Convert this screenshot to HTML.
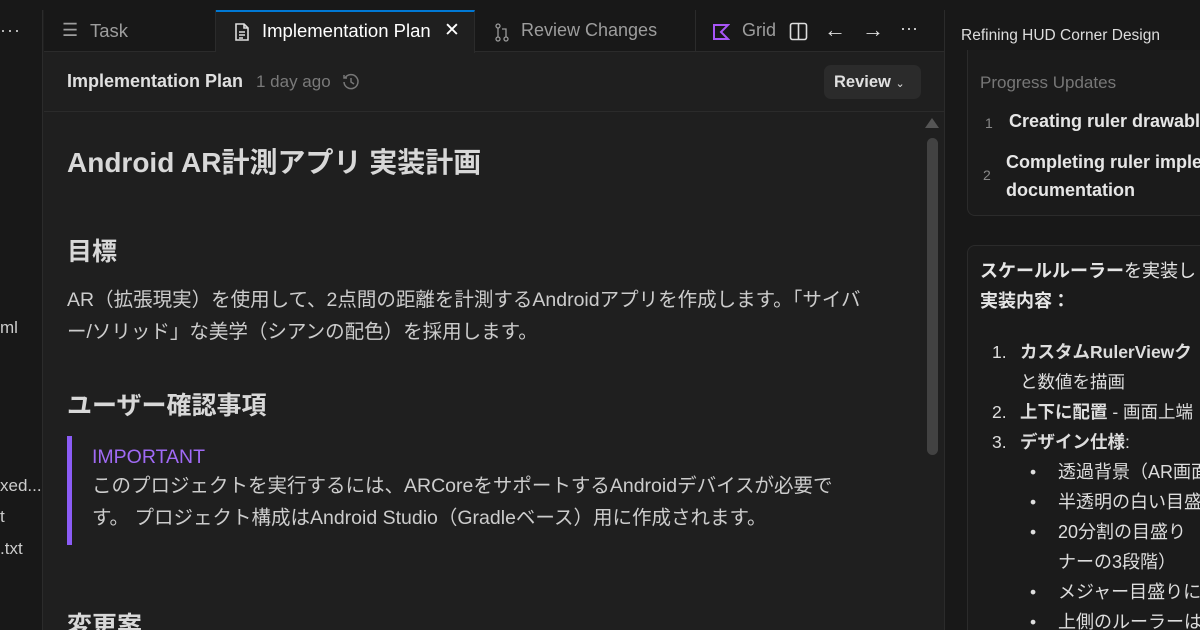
<!DOCTYPE html>
<html><head><meta charset="utf-8"><style>
*{margin:0;padding:0;box-sizing:border-box}
html,body{width:1200px;height:630px;overflow:hidden}
body{background:#1f1f1f;font-family:"Liberation Sans","Noto Sans CJK JP",sans-serif;color:#cccccc;position:relative}
.a{position:absolute;white-space:nowrap}
</style></head><body>
<div class="a" style="left:0;top:0;width:1200px;height:10px;background:#181818"></div>
<div class="a" style="left:0;top:10px;width:43px;height:620px;background:#181818;border-right:1px solid #2b2b2b"></div>
<div class="a" style="left:0;top:20px;font-size:18px;color:#ccc;letter-spacing:1px">···</div>
<div class="a" style="left:0;top:318px;font-size:17px;color:#ccc">ml</div>
<div class="a" style="left:0;top:476px;font-size:17px;color:#ccc">xed...</div>
<div class="a" style="left:0;top:507px;font-size:17px;color:#ccc">t</div>
<div class="a" style="left:0;top:539px;font-size:17px;color:#ccc">.txt</div>
<div class="a" style="left:44px;top:10px;width:900px;height:42px;background:#181818;border-bottom:1px solid #2b2b2b"></div>
<div class="a" style="left:44px;top:10px;width:172px;height:42px;border-right:1px solid #2b2b2b"></div>
<div class="a" style="left:62px;top:20px;font-size:18px;color:#9d9d9d">☰</div>
<div class="a" style="left:90px;top:20px;font-size:18.5px;color:#9d9d9d">Task</div>
<div class="a" style="left:216px;top:10px;width:259px;height:43px;background:#1f1f1f;border-top:2px solid #0078d4;border-right:1px solid #2b2b2b"></div>
<svg class="a" style="left:234px;top:23px" width="16" height="19" viewBox="0 0 16 19"><path d="M2 1h8l4 4v12H2z M10 1v4h4 M5 9h6 M5 12h6 M5 15h4" fill="none" stroke="#ddd" stroke-width="1.6"/></svg>
<div class="a" style="left:262px;top:20px;font-size:18.5px;color:#fff">Implementation Plan</div>
<div class="a" style="left:444px;top:19px;font-size:19px;color:#fff">✕</div>
<div class="a" style="left:475px;top:10px;width:221px;height:42px;border-right:1px solid #2b2b2b"></div>
<svg class="a" style="left:494px;top:23px" width="16" height="19" viewBox="0 0 16 19"><circle cx="4" cy="3" r="2" fill="none" stroke="#999" stroke-width="1.3"/><circle cx="4" cy="16" r="2" fill="none" stroke="#999" stroke-width="1.3"/><circle cx="12" cy="16" r="2" fill="none" stroke="#999" stroke-width="1.3"/><path d="M4 5v9 M12 14V6H8" fill="none" stroke="#999" stroke-width="1.3"/></svg>
<div class="a" style="left:521px;top:20px;font-size:18px;color:#9d9d9d">Review Changes</div>
<svg class="a" style="left:712px;top:23px" width="18" height="18" viewBox="0 0 18 18"><path d="M2 2h14L9 9l7 7H2z" fill="none" stroke="#a855f7" stroke-width="2"/></svg>
<div class="a" style="left:742px;top:20px;font-size:18px;color:#9d9d9d">Grid</div>
<svg class="a" style="left:789px;top:22px" width="19" height="19" viewBox="0 0 19 19"><rect x="1.5" y="1.5" width="16" height="16" rx="2" fill="none" stroke="#ddd" stroke-width="1.6"/><path d="M9.5 1.5v16" stroke="#ddd" stroke-width="1.6"/></svg>
<div class="a" style="left:824px;top:17px;font-size:22px;color:#ddd">←</div>
<div class="a" style="left:862px;top:17px;font-size:22px;color:#ddd">→</div>
<div class="a" style="left:900px;top:18px;font-size:18px;color:#ddd">···</div>
<div class="a" style="left:44px;top:111px;width:900px;height:1px;background:#2b2b2b"></div>
<div class="a" style="left:67px;top:71px;font-size:18px;color:#e0e0e0;font-weight:bold">Implementation Plan</div>
<div class="a" style="left:256px;top:72px;font-size:17px;color:#7a7a7a">1 day ago</div>
<svg class="a" style="left:341px;top:72px" width="20" height="20" viewBox="0 0 20 20"><path d="M4 6A7 7 0 1 1 3 10 M3 3v3h3 M10 6v4l3 2" fill="none" stroke="#777" stroke-width="1.5"/></svg>
<div class="a" style="left:824px;top:65px;width:97px;height:34px;background:#2b2b2b;border-radius:7px"></div>
<div class="a" style="left:834px;top:73px;font-size:16.5px;color:#e0e0e0;font-weight:bold">Review <span style="font-size:11px;font-weight:normal">⌄</span></div>
<div class="a" style="left:925px;top:118px;width:0;height:0;border-left:7px solid transparent;border-right:7px solid transparent;border-bottom:10px solid #555"></div>
<div class="a" style="left:927px;top:138px;width:11px;height:317px;background:#424242;border-radius:6px"></div>
<div class="a" style="left:67px;top:141px;font-size:28px;font-weight:bold;color:#d8d8d8">Android AR計測アプリ 実装計画</div>
<div class="a" style="left:67px;top:232px;font-size:25px;font-weight:bold;color:#d8d8d8">目標</div>
<div class="a" style="left:67px;top:284px;font-size:19.5px;color:#cccccc;line-height:32px">AR（拡張現実）を使用して、2点間の距離を計測するAndroidアプリを作成します。「サイバ<br>ー/ソリッド」な美学（シアンの配色）を採用します。</div>
<div class="a" style="left:67px;top:386px;font-size:25px;font-weight:bold;color:#d8d8d8">ユーザー確認事項</div>
<div class="a" style="left:67px;top:436px;width:5px;height:109px;background:#8b5cf6"></div>
<div class="a" style="left:92px;top:446px;font-size:19.5px;color:#a06af5">IMPORTANT</div>
<div class="a" style="left:92px;top:470px;font-size:19.5px;color:#cccccc;line-height:32px">このプロジェクトを実行するには、ARCoreをサポートするAndroidデバイスが必要で<br>す。 プロジェクト構成はAndroid Studio（Gradleベース）用に作成されます。</div>
<div class="a" style="left:67px;top:606px;font-size:25px;font-weight:bold;color:#d8d8d8">変更案</div>
<div class="a" style="left:944px;top:10px;width:256px;height:620px;background:#181818;border-left:1px solid #2b2b2b"></div>
<div class="a" style="left:961px;top:27px;font-size:15.5px;color:#dddddd">Refining HUD Corner Design</div>
<div class="a" style="left:967px;top:50px;width:260px;height:166px;border:1px solid #2b2b2b;border-top:none;border-radius:0 0 8px 8px;background:#1b1b1b"></div>
<div class="a" style="left:980px;top:73px;font-size:17px;color:#777">Progress Updates</div>
<div class="a" style="left:985px;top:115px;font-size:14px;color:#888">1</div>
<div class="a" style="left:1009px;top:111px;font-size:18px;color:#e6e6e6;font-weight:bold">Creating ruler drawable</div>
<div class="a" style="left:983px;top:167px;font-size:14px;color:#888">2</div>
<div class="a" style="left:1006px;top:148px;font-size:18px;color:#e6e6e6;font-weight:bold;line-height:28px">Completing ruler imple<br>documentation</div>
<div class="a" style="left:967px;top:245px;width:260px;height:400px;border:1px solid #2b2b2b;border-radius:8px;background:#1b1b1b"></div>
<div class="a" style="left:980px;top:256px;font-size:18px;color:#e6e6e6;line-height:30px"><b>スケールルーラー</b>を実装し<br><b>実装内容：</b></div>
<div class="a" style="left:992px;top:337px;font-size:17.5px;color:#dddddd;line-height:30px">1.<br><br>2.<br>3.</div>
<div class="a" style="left:1020px;top:337px;font-size:17.5px;color:#dddddd;line-height:30px"><b>カスタムRulerViewク</b><br>と数値を描画<br><b>上下に配置</b> - 画面上端<br><b>デザイン仕様</b>:</div>
<div class="a" style="left:1030px;top:457px;font-size:17.5px;color:#dddddd;line-height:30px">•<br>•<br>•<br><br>•<br>•</div>
<div class="a" style="left:1058px;top:457px;font-size:18px;color:#dddddd;line-height:30px">透過背景（AR画面<br>半透明の白い目盛<br>20分割の目盛り<br>ナーの3段階）<br>メジャー目盛りに<br>上側のルーラーは</div>
</body></html>
